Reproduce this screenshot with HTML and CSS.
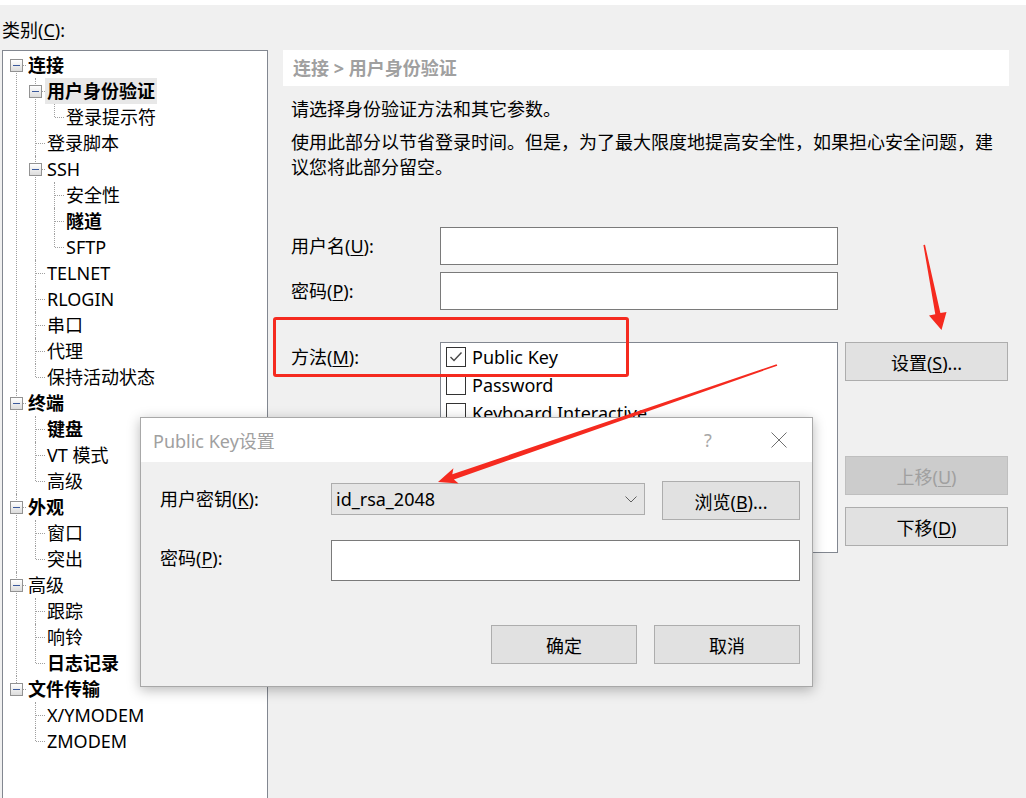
FILE: index.html
```html
<!DOCTYPE html>
<html lang="zh-CN">
<head>
  <meta charset="UTF-8" />
  <title>会话选项 - 用户身份验证</title>
  <link rel="stylesheet" href="styles.css">
</head>
<body>
  <div class="top-strip"></div>

  <div class="main">
    <div class="left">
      <div class="cat-label">类别(<u>C</u>):</div>
      <ul class="tree">
        <li class="open"><span class="exp"></span><span class="lbl bold">连接</span>
          <ul>
            <li class="open"><span class="exp"></span><span class="lbl bold sel">用户身份验证</span>
              <ul>
                <li><span class="lbl">登录提示符</span></li>
              </ul>
            </li>
            <li><span class="lbl">登录脚本</span></li>
            <li class="open"><span class="exp"></span><span class="lbl">SSH</span>
              <ul>
                <li><span class="lbl">安全性</span></li>
                <li><span class="lbl bold">隧道</span></li>
                <li><span class="lbl">SFTP</span></li>
              </ul>
            </li>
            <li><span class="lbl">TELNET</span></li>
            <li><span class="lbl">RLOGIN</span></li>
            <li><span class="lbl">串口</span></li>
            <li><span class="lbl">代理</span></li>
            <li><span class="lbl">保持活动状态</span></li>
          </ul>
        </li>
        <li class="open"><span class="exp"></span><span class="lbl bold">终端</span>
          <ul>
            <li><span class="lbl bold">键盘</span></li>
            <li><span class="lbl">VT 模式</span></li>
            <li><span class="lbl">高级</span></li>
          </ul>
        </li>
        <li class="open"><span class="exp"></span><span class="lbl bold">外观</span>
          <ul>
            <li><span class="lbl">窗口</span></li>
            <li><span class="lbl">突出</span></li>
          </ul>
        </li>
        <li class="open"><span class="exp"></span><span class="lbl">高级</span>
          <ul>
            <li><span class="lbl">跟踪</span></li>
            <li><span class="lbl">响铃</span></li>
            <li><span class="lbl bold">日志记录</span></li>
          </ul>
        </li>
        <li class="open"><span class="exp"></span><span class="lbl bold">文件传输</span>
          <ul>
            <li><span class="lbl">X/YMODEM</span></li>
            <li><span class="lbl">ZMODEM</span></li>
          </ul>
        </li>
      </ul>
    </div>

    <div class="panel">
      <div class="crumb">连接 &gt; 用户身份验证</div>
      <p class="intro">请选择身份验证方法和其它参数。</p>
      <p class="desc">使用此部分以节省登录时间。但是，为了最大限度地提高安全性，如果担心安全问题，建议您将此部分留空。</p>

      <div class="form">
        <div class="field">
          <label class="field-label">用户名(<u>U</u>):</label>
          <div class="textbox"></div>
        </div>
        <div class="field field-pass">
          <label class="field-label">密码(<u>P</u>):</label>
          <div class="textbox"></div>
        </div>
        <div class="method">
          <label class="field-label method-label">方法(<u>M</u>):</label>
          <div class="method-list">
            <div class="method-item">
              <span class="check">
                <svg width="18" height="18" viewBox="0 0 18 18"><polyline points="3.5,9 7,12.5 14.5,4.5" fill="none" stroke="#474747" stroke-width="1.4"/></svg>
              </span>
              Public Key
            </div>
            <div class="method-item"><span class="check"></span>Password</div>
            <div class="method-item"><span class="check"></span>Keyboard Interactive</div>
          </div>
          <div class="side-buttons">
            <button class="btn">设置(<u>S</u>)...</button>
            <button class="btn btn-up" disabled>上移(<u>U</u>)</button>
            <button class="btn btn-down">下移(<u>D</u>)</button>
          </div>
        </div>
      </div>
    </div>
  </div>

  <div class="highlight"></div>

  <div class="dialog">
    <div class="dialog-title">
      <span>Public Key设置</span>
      <span class="title-help">?</span>
      <span class="title-close">
        <svg width="16" height="16" viewBox="0 0 16 16"><path d="M0.5 0.5 L15.5 15.5 M15.5 0.5 L0.5 15.5" stroke="#707070" stroke-width="1"/></svg>
      </span>
    </div>
    <div class="dialog-body">
      <div class="dlg-row">
        <label class="dlg-label">用户密钥(<u>K</u>):</label>
        <div class="combo">
          <span>id_rsa_2048</span>
          <svg width="12" height="7" viewBox="0 0 12 7"><polyline points="0.5,0.5 6,6 11.5,0.5" fill="none" stroke="#606060" stroke-width="1"/></svg>
        </div>
        <button class="btn btn-browse">浏览(<u>B</u>)...</button>
      </div>
      <div class="dlg-row dlg-row-pass">
        <label class="dlg-label">密码(<u>P</u>):</label>
        <div class="textbox dlg-pass"></div>
      </div>
      <div class="dlg-actions">
        <button class="btn btn-dlg">确定</button>
        <button class="btn btn-dlg">取消</button>
      </div>
    </div>
  </div>

  <svg class="marks" width="1026" height="798" viewBox="0 0 1026 798">
    <polygon fill="#f52a1f" points="923.4,245 925,244.8 940.4,313 946.5,312 941.5,330 929,315.5 935.3,314.2"/>
    <polygon fill="#f52a1f" points="777.3,365.7 776.6,364.3 452.3,474.2 453.4,468.3 438,482 458.6,483.5 453.9,479.4"/>
  </svg>
</body>
</html>
```

FILE: styles.css
```css
body {
  margin: 0;
  height: 798px;
  overflow: hidden;
  position: relative;
  background-color: #f0f0f0;
  color: #000;
  font-family: "Noto Sans", "Noto Sans CJK SC", sans-serif;
  font-size: 18px;
}

u {
  text-decoration-thickness: 1px;
  text-underline-offset: 2px;
}

.top-strip {
  height: 5px;
  background-color: #fff;
}

.main {
  display: flex;
  align-items: flex-start;
}

/* category tree */
.left {
  width: 266px;
  margin-left: 2px;
}

.cat-label {
  padding-top: 13px;
  line-height: 24px;
}

.tree {
  margin: 8px 0 0 0;
  padding: 1px 0 0 0;
  height: 760px;
  box-sizing: border-box;
  border: 1px solid #828790;
  background-color: #fff;
  list-style: none;
}

.tree ul {
  margin: 0;
  padding: 0 0 0 19px;
  list-style: none;
}

.tree li {
  position: relative;
  line-height: 26px;
}

.tree li::before {
  content: "";
  position: absolute;
  left: 13px;
  top: 0;
  bottom: 0;
  border-left: 1px dotted #a0a0a0;
}

.tree li:last-child::before {
  bottom: auto;
  height: 13px;
}

.tree > li:first-child::before {
  top: 13px;
}

.tree li::after {
  content: "";
  position: absolute;
  left: 14px;
  top: 13px;
  width: 9px;
  border-top: 1px dotted #a0a0a0;
}

.exp {
  position: absolute;
  left: 7px;
  top: 7px;
  width: 13px;
  height: 13px;
  box-sizing: border-box;
  border: 1px solid #929292;
  background: linear-gradient(#ffffff, #dcdcdc);
  z-index: 1;
}

.exp::after {
  content: "";
  position: absolute;
  left: 2px;
  top: 5px;
  width: 7px;
  height: 1px;
  background-color: #3b5a9c;
}

.lbl {
  display: inline-block;
  margin-left: 23px;
  padding: 0 2px;
  white-space: nowrap;
}

.bold {
  font-weight: bold;
}

.sel {
  background-color: #e8e8e8;
}

/* right panel */
.panel {
  width: 726px;
  margin: 45px 0 0 15px;
}

.crumb {
  height: 36px;
  line-height: 36px;
  padding-left: 10px;
  background-color: #fff;
  color: #a0a0a0;
  font-weight: bold;
}

.intro,
.desc {
  margin: 11px 0 0 8px;
  width: 710px;
  line-height: 25px;
}

.desc {
  margin-top: 8px;
}

.form {
  margin: 47px 0 0 8px;
}

.field {
  display: flex;
  align-items: center;
  height: 38px;
}

.field-pass {
  margin-top: 7px;
}

.field-label {
  width: 149px;
  flex: none;
  line-height: 25px;
}

.textbox {
  width: 398px;
  height: 38px;
  box-sizing: border-box;
  border: 1px solid #7a7a7a;
  background-color: #fff;
}

.method {
  display: flex;
  align-items: flex-start;
  margin-top: 32px;
}

.method-label {
  padding-top: 3px;
}

.method-list {
  width: 398px;
  height: 211px;
  flex: none;
  box-sizing: border-box;
  border: 1px solid #828790;
  background-color: #fff;
}

.method-item {
  display: flex;
  align-items: center;
  height: 28px;
  padding-left: 5px;
  white-space: nowrap;
}

.check {
  display: flex;
  align-items: center;
  justify-content: center;
  width: 20px;
  height: 20px;
  box-sizing: border-box;
  margin-right: 6px;
  border: 1px solid #333;
  background-color: #fff;
}

.side-buttons {
  display: flex;
  flex-direction: column;
  margin-left: 7px;
  width: 163px;
}

.btn {
  height: 39px;
  padding: 0;
  box-sizing: border-box;
  border: 1px solid #adadad;
  background-color: #e1e1e1;
  color: #000;
  font-family: inherit;
  font-size: 18px;
}

.btn-up {
  margin-top: 75px;
  background-color: #cccccc;
  border-color: #bfbfbf;
  color: #a0a0a0;
}

.btn-down {
  margin-top: 12px;
}

/* red annotation box */
.highlight {
  position: absolute;
  left: 273px;
  top: 317px;
  width: 356px;
  height: 60px;
  box-sizing: border-box;
  border: 3px solid #f52a1f;
  border-radius: 3px;
}

/* Public Key dialog */
.dialog {
  position: absolute;
  left: 140px;
  top: 417px;
  width: 673px;
  height: 270px;
  box-sizing: border-box;
  border: 1px solid #a8a8a8;
  background-color: #f0f0f0;
  box-shadow: 0 3px 12px rgba(0, 0, 0, 0.28);
}

.dialog-title {
  display: flex;
  align-items: center;
  height: 44px;
  padding-left: 12px;
  background-color: #fff;
  color: #a0a0a0;
}

.title-help {
  margin-left: auto;
  width: 46px;
  text-align: center;
  color: #a8a8a8;
}

.title-close {
  display: flex;
  justify-content: center;
  width: 46px;
  margin: 0 10px 0 25px;
}

.dialog-body {
  padding: 19px 12px 0 19px;
}

.dlg-row {
  display: flex;
  align-items: flex-start;
  height: 39px;
}

.dlg-row-pass {
  margin-top: 20px;
  height: 41px;
}

.dlg-label {
  width: 171px;
  flex: none;
  line-height: 37px;
}

.dlg-row-pass .dlg-label {
  line-height: 37px;
}

.combo {
  display: flex;
  align-items: center;
  justify-content: space-between;
  width: 314px;
  height: 32px;
  margin-top: 2px;
  box-sizing: border-box;
  padding: 0 7px 0 4px;
  border: 1px solid #adadad;
  background-color: #e5e5e5;
}

.btn-browse {
  width: 138px;
  margin-left: 17px;
}

.dlg-pass {
  width: 469px;
  height: 41px;
}

.dlg-actions {
  display: flex;
  justify-content: flex-end;
  gap: 17px;
  margin-top: 44px;
}

.btn-dlg {
  width: 146px;
}

.marks {
  position: absolute;
  left: 0;
  top: 0;
  pointer-events: none;
}
```
